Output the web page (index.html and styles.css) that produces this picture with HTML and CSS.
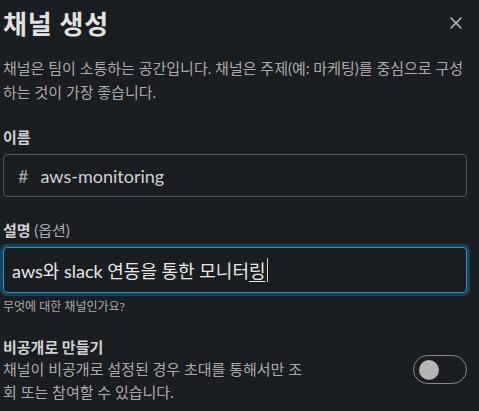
FILE: index.html
```html
<!DOCTYPE html>
<html lang="ko">
<head>
    <meta charset="UTF-8">
    <title>채널 생성</title>
    <link rel="stylesheet" href="styles.css">
</head>
<body>
    <div class="modal">
        <div class="modal-header">
            <h1>채널 생성</h1>
            <button class="close-button" aria-label="닫기">
                <svg width="12" height="12" viewBox="0 0 12 12">
                    <path d="M1 1 L11 11 M11 1 L1 11" stroke="#bcbdbe" stroke-width="1.5" stroke-linecap="round"/>
                </svg>
            </button>
        </div>
        <p class="intro">채널은 팀이 소통하는 공간입니다. 채널은 주제(예: 마케팅)를 중심으로 구성하는 것이 가장 좋습니다.</p>

        <div class="field">
            <label class="field-label">이름</label>
            <div class="text-input">
                <span class="hash">#</span>
                <span class="value">aws-monitoring</span>
            </div>
        </div>

        <div class="field">
            <label class="field-label">설명 <span class="optional">(옵션)</span></label>
            <div class="text-input focused">
                <span class="value strong">aws와 slack 연동을 통한 모니터<span class="composing">링</span></span><span class="caret"></span>
            </div>
            <div class="hint">무엇에 대한 채널인가요?</div>
        </div>

        <div class="private-row">
            <div class="private-text">
                <div class="field-label">비공개로 만들기</div>
                <div class="private-desc">채널이 비공개로 설정된 경우 초대를 통해서만 조회 또는 참여할 수 있습니다.</div>
            </div>
            <div class="toggle"><div class="knob"></div></div>
        </div>
    </div>
</body>
</html>
```

FILE: styles.css
```css
body {
    margin: 0;
    padding: 0;
    background-color: #1a1d21;
    font-family: Lato, "Noto Sans CJK KR", sans-serif;
    color: #d1d2d3;
}
.modal {
    padding: 0 12px 0 3px;
}
.modal-header {
    display: flex;
    align-items: center;
    justify-content: space-between;
    height: 44px;
}
h1 {
    margin: 0;
    font-size: 26px;
    font-weight: 700;
    letter-spacing: 0.8px;
    color: #e1e1e2;
}
.close-button {
    background: none;
    border: none;
    padding: 0;
    margin-right: 4px;
    margin-top: 2px;
    width: 14px;
    height: 14px;
    display: flex;
    align-items: center;
    justify-content: center;
}
.intro {
    margin: 12px 0 0;
    font-size: 15px;
    line-height: 24px;
    color: #ababad;
}
.field {
    margin-top: 22px;
}
.field-label {
    display: block;
    font-size: 15px;
    font-weight: 700;
    line-height: 22px;
    color: #d1d2d3;
    margin-bottom: 6px;
}
.optional {
    font-weight: 400;
    color: #ababad;
}
.text-input {
    display: flex;
    align-items: center;
    height: 41px;
    border: 1px solid #505256;
    border-radius: 4px;
    padding: 0 14px;
    font-size: 18px;
}
.hash {
    color: #ababad;
    margin-right: 12px;
}
.value {
    color: #d1d2d3;
}
.text-input.focused {
    height: 44px;
    padding: 0 8px;
    border-color: #1d9bd1;
    box-shadow: 0 0 0 3px rgba(29, 155, 209, 0.3);
}
.value.strong {
    color: #e8e8e8;
}
.composing {
    text-decoration: underline;
    text-underline-offset: 3px;
}
.caret {
    width: 1px;
    height: 24px;
    background-color: #d1d2d3;
    margin-left: 1px;
}
.hint {
    margin-top: 4px;
    font-size: 12px;
    color: #ababad;
}
.private-row {
    display: flex;
    align-items: flex-start;
    justify-content: space-between;
    margin-top: 22px;
}
.private-text {
    width: 305px;
}
.private-text .field-label {
    margin-bottom: 0;
}
.private-desc {
    font-size: 15px;
    line-height: 23px;
    color: #ababad;
    word-break: break-all;
}
.toggle {
    margin-top: 19px;
    width: 54px;
    height: 29px;
    border: 1px solid #8a8b8d;
    border-radius: 15px;
    display: flex;
    align-items: center;
    padding-left: 5px;
    box-sizing: border-box;
}
.knob {
    width: 20px;
    height: 20px;
    border-radius: 50%;
    background-color: #b5b5b6;
}
```
